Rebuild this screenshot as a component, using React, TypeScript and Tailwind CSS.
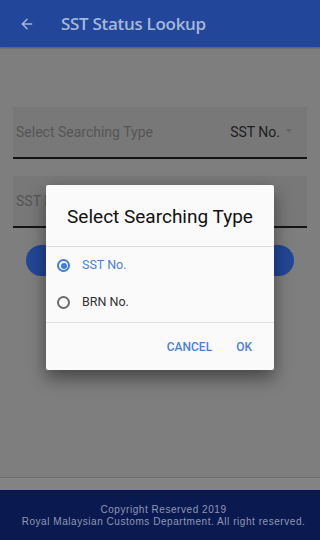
import { ArrowLeft } from "lucide-react";

export default function App() {
  return (
    <div className="relative w-[320px] h-[540px] overflow-hidden bg-[#7e7e7e] font-['Roboto',sans-serif]">
      {/* Toolbar (dimmed) */}
      <header className="h-[47px] bg-[#22479a] flex items-center shadow-[0_1px_2px_rgba(0,0,0,0.3)]">
        <ArrowLeft className="ml-[19px] w-[16px] h-[16px] text-[#a6b7d9]" strokeWidth={2.2} />
        <h1 className="ml-[26px] text-[17px] font-semibold text-[#a6b7d9] font-['Open_Sans',sans-serif] tracking-[-0.3px]">
          SST Status Lookup
        </h1>
      </header>

      {/* Form (dimmed) */}
      <div className="px-[13px] pt-[60px]">
        <div className="h-[52px] bg-[#787878] border-b-2 border-[#141414] flex items-center justify-between px-[3px]">
          <span className="text-[14px] text-[#555]">Select Searching Type</span>
          <span className="flex items-center gap-[6px] pr-[12px] text-[14px] text-[#1e1e1e]">
            SST No.
            <span className="w-0 h-0 border-x-[3.5px] border-x-transparent border-t-[4px] border-t-[#666] mb-[2px]" />
          </span>
        </div>
        <div className="mt-[17px] h-[52px] bg-[#787878] border-b-2 border-[#141414] flex items-center px-[3px]">
          <span className="text-[14px] text-[#555]">SST No.</span>
        </div>
        <div className="mt-[17px] mx-[13px] h-[31px] rounded-full bg-[#224796]" />
      </div>

      {/* Footer (dimmed) */}
      <div className="absolute left-0 right-0 bottom-0">
        <div className="h-[13px] bg-[#838383] border-t border-[#727272]" />
        <footer className="h-[50px] bg-[#0a1a50] flex flex-col items-center justify-center pt-[2px] pl-[7px] text-[10px] leading-[12px] tracking-[0.55px] text-[#8f97b4] font-['Liberation_Sans',sans-serif]">
          <p>Copyright Reserved 2019</p>
          <p>Royal Malaysian Customs Department. All right reserved.</p>
        </footer>
      </div>

      {/* Dialog */}
      <div className="absolute left-[46px] top-[185px] w-[228px] h-[185px] bg-[#fafafa] rounded-[2px] shadow-[0_8px_18px_rgba(0,0,0,0.45)] flex flex-col">
        <h2 className="h-[61px] flex items-center justify-center text-[19px] text-[#111] pt-[4px]">
          Select Searching Type
        </h2>
        <div className="border-t border-[#dedede]" />
        <div className="flex-1">
          <label className="h-[37px] flex items-center pl-[11px] gap-[12px]">
            <span className="w-[13px] h-[13px] rounded-full border-2 border-[#3f7ae0] flex items-center justify-center">
              <span className="w-[6px] h-[6px] rounded-full bg-[#3f7ae0]" />
            </span>
            <span className="text-[12.5px] text-[#4a80d8]">SST No.</span>
          </label>
          <label className="h-[37px] flex items-center pl-[11px] gap-[12px]">
            <span className="w-[13px] h-[13px] rounded-full border-2 border-[#6b6b6b]" />
            <span className="text-[12.5px] text-[#333]">BRN No.</span>
          </label>
        </div>
        <div className="border-t border-[#dedede]" />
        <div className="h-[47px] flex items-center justify-end gap-[24px] pr-[22px] text-[12px] font-medium text-[#4a80d8]">
          <button>CANCEL</button>
          <button>OK</button>
        </div>
      </div>
    </div>
  );
}
